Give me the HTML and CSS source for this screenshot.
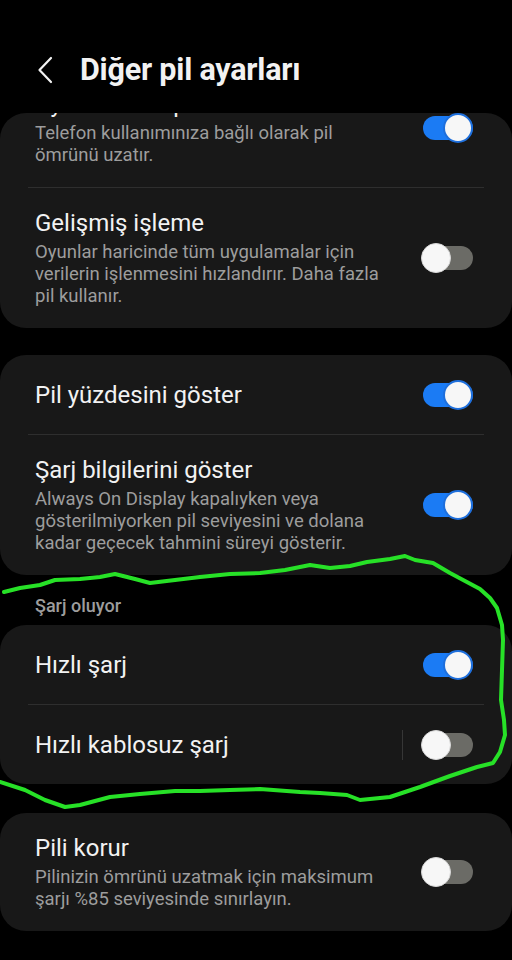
FILE: index.html
```html
<!DOCTYPE html>
<html lang="tr">
<head>
  <meta charset="UTF-8" />
  <meta name="viewport" content="width=device-width, initial-scale=1" />
  <title>Diğer pil ayarları</title>
  <link rel="stylesheet" href="styles.css">
</head>
<body>
  <div class="screen">
    <header class="appbar">
      <svg class="back" width="18" height="28" viewBox="0 0 18 28">
        <path d="M15 2 L3.5 14 L15 26" fill="none" stroke="#f2f2f2" stroke-width="2.2" stroke-linecap="round" stroke-linejoin="round"/>
      </svg>
      <h1>Diğer pil ayarları</h1>
    </header>

    <main class="list">
      <section class="card card-first">
        <div class="row">
          <div class="text">
            <div class="title">Uyarlanabilir pil</div>
            <div class="sub">Telefon kullanımınıza bağlı olarak pil<br>ömrünü uzatır.</div>
          </div>
          <span class="switch on"></span>
        </div>
        <div class="divider"></div>
        <div class="row">
          <div class="text">
            <div class="title">Gelişmiş işleme</div>
            <div class="sub">Oyunlar haricinde tüm uygulamalar için<br>verilerin işlenmesini hızlandırır. Daha fazla<br>pil kullanır.</div>
          </div>
          <span class="switch"></span>
        </div>
      </section>

      <section class="card">
        <div class="row single">
          <div class="text"><div class="title">Pil yüzdesini göster</div></div>
          <span class="switch on"></span>
        </div>
        <div class="divider"></div>
        <div class="row">
          <div class="text">
            <div class="title">Şarj bilgilerini göster</div>
            <div class="sub">Always On Display kapalıyken veya<br>gösterilmiyorken pil seviyesini ve dolana<br>kadar geçecek tahmini süreyi gösterir.</div>
          </div>
          <span class="switch on"></span>
        </div>
      </section>

      <h2 class="section-label">Şarj oluyor</h2>
      <section class="card">
        <div class="row single">
          <div class="text"><div class="title">Hızlı şarj</div></div>
          <span class="switch on"></span>
        </div>
        <div class="divider"></div>
        <div class="row single">
          <div class="text"><div class="title">Hızlı kablosuz şarj</div></div>
          <span class="vline"></span>
          <span class="switch"></span>
        </div>
      </section>

      <section class="card">
        <div class="row">
          <div class="text">
            <div class="title">Pili korur</div>
            <div class="sub">Pilinizin ömrünü uzatmak için maksimum<br>şarjı %85 seviyesinde sınırlayın.</div>
          </div>
          <span class="switch"></span>
        </div>
      </section>
    </main>

    <!-- hand-drawn highlight on top of the screenshot -->
    <svg class="scribble" width="512" height="960" viewBox="0 0 512 960">
      <path fill="none" stroke="#27e127" stroke-width="4" stroke-linecap="round" stroke-linejoin="round"
        d="M4 592 L20 588 L40 585 L55 580 L80 579 L100 577 L115 574 L135 579 L150 583 L175 580 L200 577 L230 574 L260 573 L285 570 L310 565 L330 568 L350 566 L367 562 L390 559 L405 556 L415 560 L433 563 L450 573 L465 581 L480 589 L490 598 L497 608 L502 625 L503 640 L502 670 L501 700 L504 720 L505 735 L500 752 L493 763 L477 767 L450 776 L420 787 L390 797 L360 800 L347 795 L320 793 L300 792 L260 789 L230 790 L200 791 L175 791 L140 794 L110 797 L80 805 L65 807 L45 800 L25 790 L0 782"/>
    </svg>
  </div>
</body>
</html>
```

FILE: styles.css
```css
body {
  margin: 0;
  background: #000;
  font-family: Roboto, "Noto Sans", sans-serif;
  color: #f2f2f2;
}
.screen {
  position: relative;
  width: 512px;
  height: 960px;
  overflow: hidden;
}
.appbar {
  display: flex;
  align-items: center;
  height: 113px;
  box-sizing: border-box;
  padding: 26px 0 0 36px;
}
.back {
  flex: none;
}
.appbar h1 {
  margin: 0 0 0 26px;
  font-size: 30.5px;
  font-weight: 700;
  line-height: 36px;
  letter-spacing: -0.2px;
}
.list {
  overflow: hidden;
  height: 847px;
  border-radius: 26px 26px 0 0;
}
.card {
  background: #181818;
  border-radius: 26px;
  margin-bottom: 29px;
}
.card-first {
  margin-top: -44px;
  margin-bottom: 27px;
}
.row {
  display: flex;
  align-items: center;
  padding: 21px 39px 21px 35px;
}
.row.single {
  min-height: 37px;
}
.text {
  flex: 1;
}
.title {
  font-size: 24px;
  line-height: 28px;
  color: #f2f2f2;
}
.sub {
  margin-top: 4px;
  font-size: 18.5px;
  line-height: 22px;
  color: #9d9d9d;
}
.divider {
  height: 1px;
  margin: 0 28px;
  background: #2e2e2e;
}
.vline {
  width: 1px;
  height: 30px;
  margin-right: 18px;
  background: #363636;
}
.section-label {
  margin: -8px 0 0;
  padding: 0 35px 9px;
  font-size: 18px;
  font-weight: 500;
  line-height: 20px;
  color: #9d9d9d;
}
.switch {
  position: relative;
  flex: none;
  width: 52px;
  height: 30px;
}
.switch::before {
  content: '';
  position: absolute;
  left: 2px;
  right: 0;
  top: 3px;
  height: 24px;
  border-radius: 12px;
  background: #6b6b66;
}
.switch::after {
  content: '';
  position: absolute;
  top: 0;
  left: 0;
  width: 30px;
  height: 30px;
  box-sizing: border-box;
  border-radius: 50%;
  background: #f7f7f7;
  border: 1px solid #d8d8d8;
}
.switch.on::before {
  background: #1b7bf4;
}
.switch.on::after {
  left: auto;
  right: 0;
  border: 2px solid #1e6fdc;
}
.scribble {
  position: absolute;
  top: 0;
  left: 0;
  pointer-events: none;
}
```
